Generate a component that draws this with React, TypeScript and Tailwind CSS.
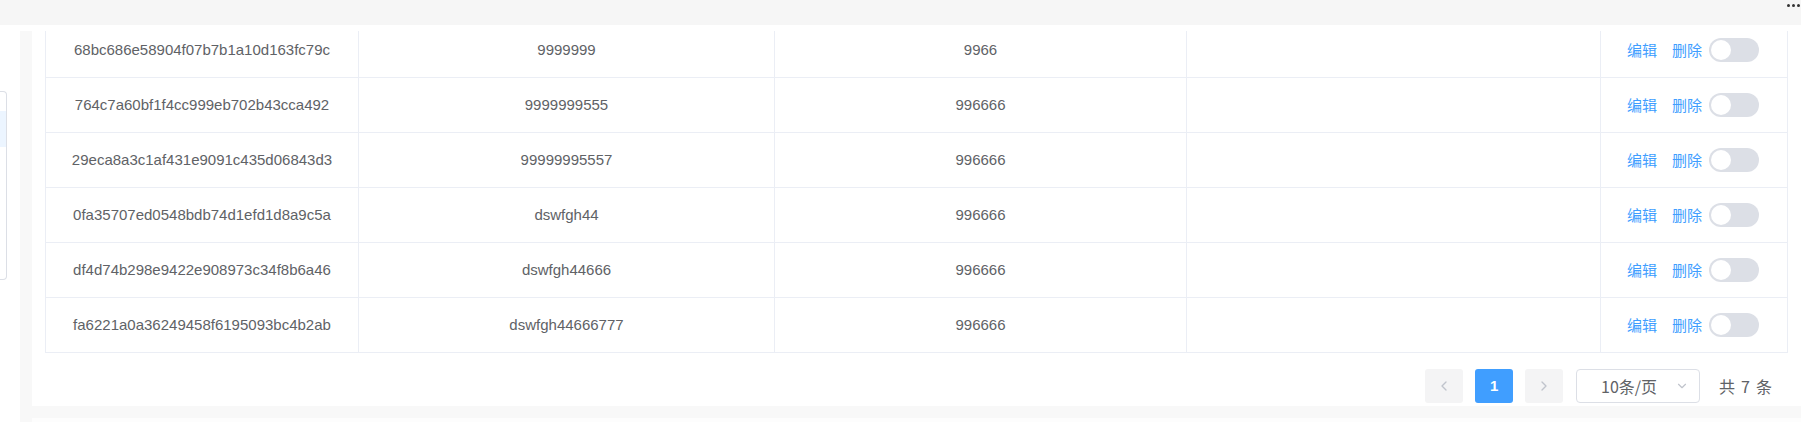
import { ChevronDown, ChevronLeft, ChevronRight } from "lucide-react";

const rows = [
  { id: "68bc686e58904f07b7b1a10d163fc79c", name: "9999999", code: "9966" },
  { id: "764c7a60bf1f4cc999eb702b43cca492", name: "9999999555", code: "996666" },
  { id: "29eca8a3c1af431e9091c435d06843d3", name: "99999995557", code: "996666" },
  { id: "0fa35707ed0548bdb74d1efd1d8a9c5a", name: "dswfgh44", code: "996666" },
  { id: "df4d74b298e9422e908973c34f8b6a46", name: "dswfgh44666", code: "996666" },
  { id: "fa6221a0a36249458f6195093bc4b2ab", name: "dswfgh44666777", code: "996666" },
];

const cjk = "font-['Noto_Sans_CJK_SC',sans-serif]";

function Switch() {
  return (
    <span className="flex h-[24px] w-[50px] items-center rounded-full bg-[#dcdfe6] px-[2px]">
      <span className="h-[20px] w-[20px] rounded-full bg-white" />
    </span>
  );
}

function Row({ id, name, code }: { id: string; name: string; code: string }) {
  const cell = "flex h-full items-center justify-center border-r border-[#ebeef5]";
  return (
    <div className="flex h-[55px] border-b border-[#ebeef5]">
      <div className={`${cell} w-[313px]`}>{id}</div>
      <div className={`${cell} w-[416px]`}>{name}</div>
      <div className={`${cell} w-[412px]`}>{code}</div>
      <div className={`${cell} w-[414px]`} />
      <div className={`${cell} w-[187px] pr-[2px] ${cjk} text-[15px] text-[#409eff]`}>
        <span>编辑</span>
        <span className="ml-[15px]">删除</span>
        <span className="ml-[7px]">
          <Switch />
        </span>
      </div>
    </div>
  );
}

export default function App() {
  return (
    <div className="h-[422px] w-[1801px] overflow-hidden bg-white font-['Liberation_Sans',Arial,sans-serif] text-[15px] text-[#606266]">
      <div className="flex h-[25px] justify-end bg-[#f6f6f6] pr-[1px] pt-[4px]">
        <div className="flex gap-[2px]">
          <span className="h-[3px] w-[3px] rounded-full bg-[#333]" />
          <span className="h-[3px] w-[3px] rounded-full bg-[#333]" />
          <span className="h-[3px] w-[3px] rounded-full bg-[#333]" />
        </div>
      </div>

      <div className="flex h-[397px]">
        {/* left menu edge */}
        <div className="w-[20px] pt-[66px]">
          <div className="h-[189px] w-[7px] overflow-hidden rounded-r-[4px] border border-l-0 border-[#dcdfe6] pt-[19px]">
            <div className="h-[36px] bg-[#ecf5ff]" />
          </div>
        </div>
        <div className="mt-[6px] w-[12px] bg-[#f8f8f8]" />

        <div className="flex flex-1 flex-col">
          <div className="h-[381px] bg-white px-[13px] pt-[6px]">
            <div className="h-[322px] overflow-hidden border-l border-[#ebeef5]">
              <div className="-mt-[8px]">
                {rows.map((r) => (
                  <Row key={r.id} {...r} />
                ))}
              </div>
            </div>

            <div className="mt-[16px] flex h-[34px] items-center justify-end pr-[16px]">
              <button className="flex h-[34px] w-[38px] items-center justify-center rounded-[3px] bg-[#f4f4f5] text-[#c0c4cc]">
                <ChevronLeft size={16} strokeWidth={2} />
              </button>
              <button className="ml-[12px] flex h-[34px] w-[38px] items-center justify-center rounded-[3px] bg-[#409eff] text-[15px] font-bold text-white">
                1
              </button>
              <button className="ml-[12px] flex h-[34px] w-[38px] items-center justify-center rounded-[3px] bg-[#f4f4f5] text-[#c0c4cc]">
                <ChevronRight size={16} strokeWidth={2} />
              </button>
              <div className="ml-[13px] flex h-[34px] w-[124px] items-center rounded-[4px] border border-[#dcdfe6] pl-[24px] pr-[10px]">
                <span className={`${cjk} flex-1 text-[16px] text-[#606266]`}>10条/页</span>
                <ChevronDown size={14} className="text-[#c0c4cc]" />
              </div>
              <span className={`${cjk} ml-[19px] flex gap-[6px] text-[16px] text-[#606266]`}>
                <span>共</span>
                <span>7</span>
                <span>条</span>
              </span>
            </div>
          </div>
          <div className="h-[12px] bg-[#f8f8f8]" />
          <div className="flex-1 bg-[#fdfdfd]" />
        </div>
      </div>
    </div>
  );
}
